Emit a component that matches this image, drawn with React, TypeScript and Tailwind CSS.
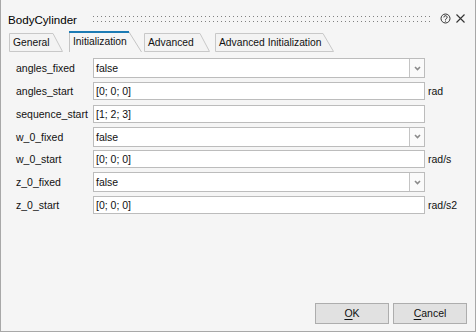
import React from 'react';

type Row = { label: string; value: string; kind: 'select' | 'text'; unit?: string };

const rows: Row[] = [
  { label: 'angles_fixed', value: 'false', kind: 'select' },
  { label: 'angles_start', value: '[0; 0; 0]', kind: 'text', unit: 'rad' },
  { label: 'sequence_start', value: '[1; 2; 3]', kind: 'text' },
  { label: 'w_0_fixed', value: 'false', kind: 'select' },
  { label: 'w_0_start', value: '[0; 0; 0]', kind: 'text', unit: 'rad/s' },
  { label: 'z_0_fixed', value: 'false', kind: 'select' },
  { label: 'z_0_start', value: '[0; 0; 0]', kind: 'text', unit: 'rad/s2' },
];

interface TabProps {
  label: string;
  w: number;
  corner: number;
  className: string;
  active?: boolean;
}

const Tab: React.FC<TabProps> = ({ label, w, corner, className, active }) => (
  <div className={`relative h-[21px] shrink-0 ${className}`}>
    <svg className="absolute left-0 top-0" width={w} height={21}>
      {active ? (
        <>
          <polyline points={`0.5,21 0.5,1 ${corner},1 ${w - 0.5},21`} fill="#f5f5f5" stroke="#c4c4c4" />
          <line x1={0} y1={1} x2={corner} y2={1} stroke="#1c7bb4" strokeWidth={2} />
        </>
      ) : (
        <polygon points={`0.5,20.5 0.5,2.5 ${corner},2.5 ${w - 0.5},20.5`} fill="#f3f3f3" stroke="#c8c8c8" />
      )}
    </svg>
    <span className={`relative block pl-[4px] leading-[12px] text-[10.3px] text-[#111] ${active ? 'pt-[5px]' : 'pt-[6px]'}`}>
      {label}
    </span>
  </div>
);

const Chevron = () => (
  <svg width="7" height="5" viewBox="0 0 7 5">
    <path d="M1 1 L3.5 3.5 L6 1" fill="none" stroke="#8a8a8a" strokeWidth="1.6" />
  </svg>
);

const Field: React.FC<{ row: Row }> = ({ row }) =>
  row.kind === 'select' ? (
    <div className="flex h-[20px] w-[332px] border border-[#bcbcbc] bg-white">
      <span className="flex-1 pl-[2px] leading-[18px]">{row.value}</span>
      <div className="flex w-[15px] items-center justify-center border-l border-[#c4c4c4] bg-[#fafafa]">
        <Chevron />
      </div>
    </div>
  ) : (
    <div className="h-[18px] w-[332px] border border-[#bcbcbc] bg-white pl-[2px] leading-[16px]">{row.value}</div>
  );

export default function App() {
  return (
    <div className="flex h-[332px] w-[476px] flex-col border-b border-l border-r border-[#a8a8a8] bg-[#f5f5f5] font-['Liberation_Sans',Arial,sans-serif] text-[10.5px] text-[#111]">
      {/* title bar */}
      <div className="flex h-[31px] shrink-0 items-start">
        <span className="mt-[13px] w-[92px] pl-[7px] text-[11.6px] leading-[14px] text-black">BodyCylinder</span>
        <svg className="mt-[16px]" width="337" height="6">
          <defs>
            <pattern id="grip" width="4" height="5" patternUnits="userSpaceOnUse">
              <rect x="0" y="0" width="1" height="1" fill="#808080" />
            </pattern>
          </defs>
          <rect width="337" height="6" fill="url(#grip)" />
        </svg>
        <svg className="ml-[10px] mt-[13px]" width="11" height="11" viewBox="0 0 11 11">
          <circle cx="5.5" cy="5.5" r="4.5" fill="none" stroke="#333" strokeWidth="1" />
          <path d="M3.9 4.4 a1.6 1.6 0 1 1 2.4 1.3 c-0.6 0.35 -0.8 0.6 -0.8 1.2" fill="none" stroke="#333" strokeWidth="1" />
          <rect x="5" y="7.6" width="1" height="1" fill="#333" />
        </svg>
        <svg className="ml-[5px] mt-[14px]" width="9" height="9" viewBox="0 0 9 9">
          <path d="M0.5 0.5 L8.5 8.5 M8.5 0.5 L0.5 8.5" stroke="#333" strokeWidth="1.1" />
        </svg>
      </div>

      {/* tabs */}
      <div className="flex h-[21px] shrink-0 pl-[8px]">
        <Tab label="General" w={54} corner={44} className="w-[54px]" />
        <Tab label="Initialization" w={73} corner={60} active className="ml-[6px] w-[73px]" />
        <Tab label="Advanced" w={66} corner={56} className="ml-[2px] w-[66px]" />
        <Tab label="Advanced Initialization" w={119} corner={108} className="ml-[5px] w-[119px]" />
      </div>

      {/* form */}
      <div className="mt-[5px] flex flex-col">
        {rows.map((row) => (
          <div key={row.label} className="flex h-[22.75px] items-center">
            <span className="w-[92px] pl-[15px] leading-[12px]">{row.label}</span>
            <Field row={row} />
            {row.unit && <span className="ml-[3px] leading-[12px]">{row.unit}</span>}
          </div>
        ))}
      </div>

      {/* buttons */}
      <div className="mt-auto flex justify-end gap-[4px] pb-[7px] pr-[8px]">
        <button className="h-[21px] w-[74px] border border-[#adadad] bg-[#e1e1e1] leading-[19px] text-[#111]">
          <span className="underline underline-offset-[2px]">O</span>K
        </button>
        <button className="h-[21px] w-[74px] border border-[#adadad] bg-[#e1e1e1] leading-[19px] text-[#111]">
          <span className="underline underline-offset-[2px]">C</span>ancel
        </button>
      </div>
    </div>
  );
}
